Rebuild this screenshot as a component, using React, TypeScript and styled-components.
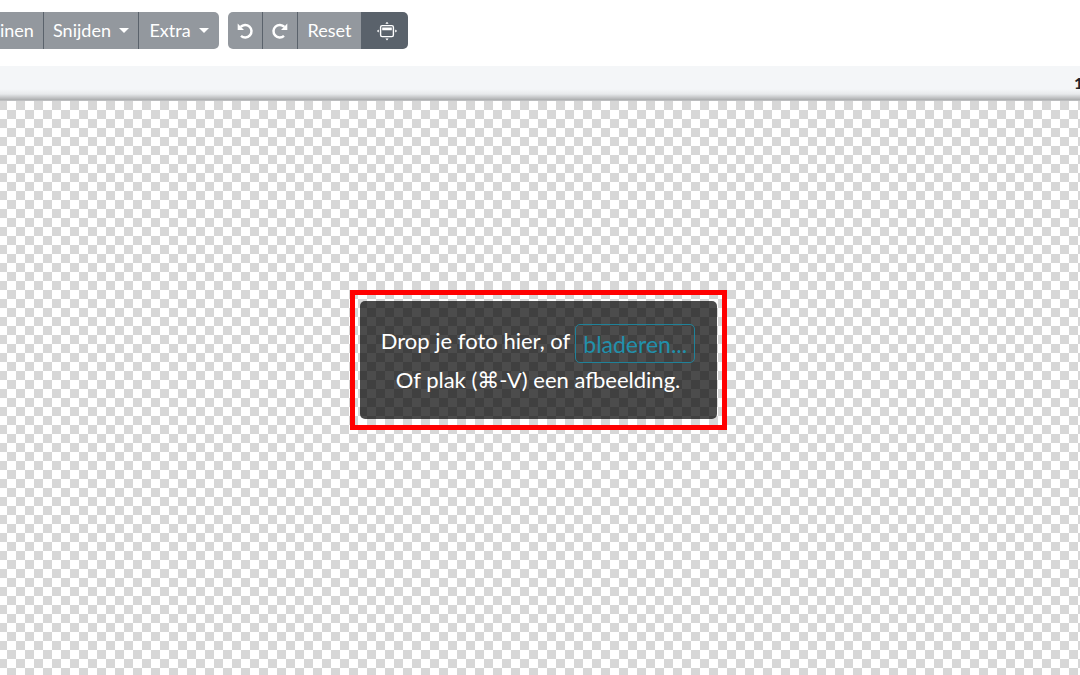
import React from "react";
import styled, { createGlobalStyle } from "styled-components";

const GlobalStyle = createGlobalStyle`
  *, *::before, *::after { box-sizing: border-box; }
  body {
    margin: 0;
    background: #fff;
    color: #212529;
    font-family: Lato, "DejaVu Sans", sans-serif;
    overflow: hidden;
  }
  button { font: inherit; cursor: pointer; }
`;

const Page = styled.div`
  display: flex;
  flex-direction: column;
  min-height: 100vh;
`;

const Toolbar = styled.header`
  display: flex;
  gap: 9px;
  padding: 12px 0 17px;
`;

const ButtonGroup = styled.div<{ $cutLeft?: boolean }>`
  display: flex;
  height: 37px;
  overflow: hidden;
  border-radius: ${(p) => (p.$cutLeft ? "0 5px 5px 0" : "5px")};
`;

const ToolButton = styled.button<{ $active?: boolean; $width: number; $flush?: boolean }>`
  display: flex;
  align-items: center;
  justify-content: ${(p) => (p.$flush ? "flex-start" : "center")};
  gap: 8px;
  width: ${(p) => p.$width}px;
  padding: 0 0 0 ${(p) => (p.$active ? "4px" : "0")};
  border: 0;
  color: #fff;
  background: ${(p) => (p.$active ? "#5a626b" : "#93989e")};
  font-size: 18px;
  line-height: 27px;
  white-space: nowrap;

  & + & {
    border-left: 1px solid ${(p) => (p.$active ? "#5a626b" : "#747a81")};
  }
`;

const Caret = styled.span`
  border-top: 5px solid #fff;
  border-left: 5px solid transparent;
  border-right: 5px solid transparent;
`;

const InfoBar = styled.div`
  display: flex;
  justify-content: flex-end;
  height: 35px;
  background:
    linear-gradient(to bottom, transparent 0, rgba(0, 0, 0, 0.05) 5px, rgba(0, 0, 0, 0.3) 11px, rgba(0, 0, 0, 0.16) 12px)
      bottom / 100% 12px no-repeat,
    #f4f6f8;
`;

const Size = styled.span`
  width: 6px;
  overflow: hidden;
  font-size: 16px;
  line-height: 34px;
  font-weight: 700;
`;

const Canvas = styled.main`
  display: flex;
  flex: 1;
  justify-content: center;
  align-items: flex-start;
  padding: 189px 4px 0 0;
  background: repeating-conic-gradient(#fff 0 25%, #d7d7d7 0 50%) -2px 0 / 18px 18px;
`;

const Highlight = styled.div`
  padding: 6px 5px;
  border: 5px solid #f00;
`;

const DropZone = styled.section`
  width: 357px;
  padding: 23px 20px 22px;
  border-radius: 5px;
  background: rgba(0, 0, 0, 0.7);
  color: #fff;
  font-size: 22px;
  text-align: center;
`;

const Line = styled.p`
  display: flex;
  justify-content: center;
  gap: 5px;
  margin: 0;
  line-height: 34px;
  white-space: nowrap;
`;

const BrowseButton = styled.button`
  height: 39px;
  padding: 2px 7px 0;
  border: 1px solid #1f8299;
  border-radius: 5px;
  background: transparent;
  color: #2190ab;
  font-size: 23px;
  line-height: 35px;
`;

const Arrow = ({ flip = false }: { flip?: boolean }) => (
  <svg width="18" height="18" viewBox="0 0 18 18" aria-hidden="true">
    <g transform={flip ? "translate(18 0) scale(-1 1)" : undefined}>
      <path d="M4.6 4.9A6.3 6.3 0 1 1 5 13.9" fill="none" stroke="#fff" strokeWidth="2.5" />
      <path d="M1.7 1.6V7.9H8Z" fill="#fff" />
    </g>
  </svg>
);

const FitIcon = () => (
  <svg width="22" height="20" viewBox="0 0 22 20" aria-hidden="true">
    <rect x="4.6" y="4.6" width="12.8" height="11" rx="1.6" fill="none" stroke="#fff" strokeWidth="1.4" />
    <path d="M6.2 6.4h9.6v2.8H6.2zM11 .8l1.6 2H9.4zM11 19.4l1.6-2H9.4zM.8 10l2-1.6v3.2zM21.2 10l-2-1.6v3.2z" fill="#fff" />
  </svg>
);

export default function App() {
  return (
    <Page>
      <GlobalStyle />
      <Toolbar>
        <ButtonGroup $cutLeft>
          <ToolButton $width={43} $flush>inen</ToolButton>
          <ToolButton $width={95}>Snijden <Caret /></ToolButton>
          <ToolButton $width={81}>Extra <Caret /></ToolButton>
        </ButtonGroup>
        <ButtonGroup>
          <ToolButton $width={34} aria-label="Linksom draaien"><Arrow /></ToolButton>
          <ToolButton $width={35} aria-label="Rechtsom draaien"><Arrow flip /></ToolButton>
          <ToolButton $width={64}>Reset</ToolButton>
          <ToolButton $width={47} $active aria-label="Passend maken"><FitIcon /></ToolButton>
        </ButtonGroup>
      </Toolbar>
      <InfoBar><Size>1</Size></InfoBar>
      <Canvas>
        <Highlight>
          <DropZone>
            <Line>
              <span>Drop je foto hier, of</span>
              <BrowseButton>bladeren...</BrowseButton>
            </Line>
            <Line>Of plak (⌘-V) een afbeelding.</Line>
          </DropZone>
        </Highlight>
      </Canvas>
    </Page>
  );
}
